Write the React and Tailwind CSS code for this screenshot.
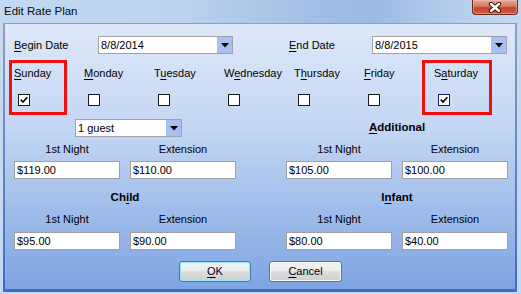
import React from "react";

function Combo({ value, width }) {
  return (
    <div className={`flex h-[18px] shrink-0 items-stretch border border-[#a3a3a3] bg-white ${width}`}>
      <div className="flex flex-1 items-center pl-[2px] leading-none">{value}</div>
      <div className="flex w-[15px] items-center justify-center bg-[#a8c0f3]">
        <svg width="8" height="5" viewBox="0 0 8 5">
          <path d="M0 0 H8 L4 4.5 Z" fill="#000" />
        </svg>
      </div>
    </div>
  );
}

function Field({ value }) {
  return (
    <div className="flex h-[18px] w-[106px] shrink-0 items-center border border-[#a0a0a0] bg-white pl-[2px] leading-none">
      {value}
    </div>
  );
}

function Check({ checked, focus }) {
  return (
    <div
      className={`flex h-[12px] w-[12px] items-center justify-center border bg-white ${
        focus ? "border-[#1b1b7a]" : "border-[#1a1a1a]"
      }`}
    >
      {checked && (
        <svg width="10" height="10" viewBox="0 0 10 10">
          <path d="M1.8 4.6 L4 7 L8.3 2.3" stroke="#000" strokeWidth="1.7" fill="none" />
        </svg>
      )}
    </div>
  );
}

function U({ children }) {
  return <span className="underline underline-offset-[2px]">{children}</span>;
}

function Half({ header, rows }) {
  return (
    <div className="flex w-[222px] shrink-0 flex-col">
      <div className="flex h-[18px] items-center">{header}</div>
      <div className="mt-[5px] flex h-[14px] gap-[10px] leading-[14px]">
        <div className="w-[106px] text-center">1st Night</div>
        <div className="w-[106px] text-center">Extension</div>
      </div>
      <div className="mt-[5px] flex gap-[10px]">
        <Field value={rows[0]} />
        <Field value={rows[1]} />
      </div>
      <div className="mt-[11px] h-[14px] text-center text-[11.5px] font-bold leading-[14px]">{rows[2]}</div>
      <div className="mt-[8px] flex h-[14px] gap-[10px] leading-[14px]">
        <div className="w-[106px] text-center">1st Night</div>
        <div className="w-[106px] text-center">Extension</div>
      </div>
      <div className="mt-[6px] flex gap-[10px]">
        <Field value={rows[3]} />
        <Field value={rows[4]} />
      </div>
    </div>
  );
}

export default function App() {
  const days = [
    [<><U>S</U>unday</>, true, false],
    [<><U>M</U>onday</>, false, false],
    [<>T<U>u</U>esday</>, false, false],
    [<>W<U>e</U>dnesday</>, false, false],
    [<>T<U>h</U>ursday</>, false, false],
    [<><U>F</U>riday</>, false, false],
    [<>S<U>a</U>turday</>, true, true],
  ];
  return (
    <div className="flex h-[294px] w-[521px] flex-col overflow-hidden bg-[#c6d9f0] font-['Liberation_Sans',Arial,sans-serif] text-[11px] text-black">
      {/* title bar */}
      <div className="relative flex h-[23px] shrink-0 items-center bg-[linear-gradient(90deg,#c3d8f0_0%,#bcd2ee_35%,#a3bfe5_60%,#9dbbe3_72%,#b7cfed_88%,#c3d8f0_100%)] pl-[4px]">
        <span className="text-[11.5px] text-[#0c0c0c]">Edit Rate Plan</span>
        <div className="absolute right-[3px] top-0 flex h-[15px] w-[46px] items-center justify-center rounded-b-[4px] border border-t-0 border-[#6a2a20] bg-[linear-gradient(#e9a897_0%,#d67a64_45%,#c3432a_55%,#d45d3d_100%)] shadow-[inset_0_0_0_1px_rgba(255,200,190,0.45)]">
          <svg width="14" height="11" viewBox="0 0 14 11">
            <path d="M3 2 L11 9 M11 2 L3 9" stroke="#40170f" strokeWidth="4.4" strokeLinecap="round" />
            <path d="M3 2 L11 9 M11 2 L3 9" stroke="#ffffff" strokeWidth="2.4" strokeLinecap="round" />
          </svg>
        </div>
      </div>
      {/* client area */}
      <div className="ml-[3px] mr-[4px] h-[269px] shrink-0 bg-[linear-gradient(#909fb7,#3a6bd0)] px-[2px] pb-[3px] pt-[1px]">
        <div className="flex h-full flex-col bg-[linear-gradient(#dee9f9_0%,#c3d6f3_40%,#7ea4e2_100%)] pl-[9px] pt-[12px]">
          {/* date row */}
          <div className="flex h-[18px] items-center">
            <div className="w-[84px] shrink-0"><U>B</U>egin Date</div>
            <Combo value="8/8/2014" width="w-[135px]" />
            <div className="w-[56px] shrink-0" />
            <div className="w-[83px] shrink-0"><U>E</U>nd Date</div>
            <Combo value="8/8/2015" width="w-[135px]" />
          </div>
          {/* days */}
          <div className="relative mt-[12px] flex">
            {days.map(([label, checked, focus], i) => (
              <div key={i} className="flex w-[70px] shrink-0 flex-col">
                <div className="h-[14px] whitespace-nowrap leading-[14px]">{label}</div>
                <div className="ml-[4px] mt-[14px]">
                  <Check checked={checked} focus={focus} />
                </div>
              </div>
            ))}
            <div className="absolute left-[-5px] top-[-6px] h-[55px] w-[58px] border-[3px] border-[#f01010]" />
            <div className="absolute left-[408px] top-[-6px] h-[55px] w-[70px] border-[3px] border-[#f01010]" />
          </div>
          {/* prices */}
          <div className="mt-[13px] flex gap-[50px]">
            <Half
              header={
                <div className="ml-[61px]">
                  <Combo value="1 guest" width="w-[107px]" />
                </div>
              }
              rows={["$119.00", "$110.00", <>Ch<U>i</U>ld</>, "$95.00", "$90.00"]}
            />
            <Half
              header={
                <div className="w-full text-center text-[11.5px] font-bold">
                  <U>A</U>dditional
                </div>
              }
              rows={["$105.00", "$100.00", <>I<U>n</U>fant</>, "$80.00", "$40.00"]}
            />
          </div>
          {/* buttons */}
          <div className="mt-[11px] flex gap-[18px] pl-[165px]">
            <button className="flex h-[21px] w-[72px] items-center justify-center rounded-[3px] border border-[#3c7fb1] bg-[linear-gradient(#f2f2f2_0%,#ebebeb_50%,#dddddd_50%,#cfcfcf_100%)] shadow-[inset_0_0_0_1px_#9fe3f8]">
              <U>O</U>K
            </button>
            <button className="flex h-[21px] w-[73px] items-center justify-center rounded-[3px] border border-[#707070] bg-[linear-gradient(#f2f2f2_0%,#ebebeb_50%,#dddddd_50%,#cfcfcf_100%)] shadow-[inset_0_0_0_1px_#fcfcfc]">
              <U>C</U>ancel
            </button>
          </div>
        </div>
      </div>
    </div>
  );
}
